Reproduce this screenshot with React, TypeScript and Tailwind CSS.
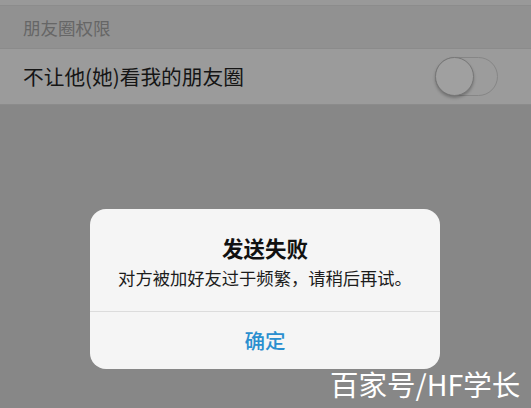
import React from "react";

const cjk = "font-['Noto_Sans_CJK_SC','Noto_Sans',sans-serif]";

function Toggle() {
  return (
    <div className="relative h-[39px] w-[63px] rounded-full border border-[#868686] bg-[#9c9c9c]">
      <div className="absolute left-[-1px] top-[-1px] h-[39px] w-[39px] rounded-full border border-[#777777] bg-[#a0a0a0] shadow-[0_2px_3px_rgba(0,0,0,0.25)]" />
    </div>
  );
}

function AlertDialog() {
  return (
    <div className="absolute left-[90px] top-[209px] flex h-[160px] w-[350px] flex-col rounded-[16px] bg-[#f5f5f5]">
      <div className="flex flex-1 flex-col items-center pt-[24px]">
        <div className="text-[21.5px] font-bold leading-[30px] text-[#111]">
          发送失败
        </div>
        <div className="mt-[2px] text-[17.3px] leading-[25px] text-[#1c1c1c]">
          对方被加好友过于频繁，请稍后再试。
        </div>
      </div>
      <div className="h-px bg-[#dcdcdc]" />
      <div className="flex h-[57px] items-center justify-center text-[20.5px] font-medium text-[#2a8fcf]">
        确定
      </div>
    </div>
  );
}

export default function App() {
  return (
    <div
      className={`relative flex h-[408px] w-[531px] flex-col overflow-hidden bg-[#878787] ${cjk}`}
    >
      <div className="h-[6px] border-b border-[#8c8c8c] bg-[#999999]" />
      <div className="flex h-[42px] items-center bg-[#919191] px-[23px] pt-[2px] text-[17.5px] text-[#666666]">
        朋友圈权限
      </div>
      <div className="flex h-[57px] items-center justify-between border-y border-[#8b8b8b] bg-[#9b9b9b] pl-[23px] pr-[33px]">
        <span className="text-[20.7px] text-[#151515]">不让他(她)看我的朋友圈</span>
        <Toggle />
      </div>
      <div className="flex-1" />

      <AlertDialog />

      <div className="absolute left-[330px] top-[366px] text-[28.5px] leading-[36px] text-white">
        百家号/HF学长
      </div>
    </div>
  );
}
